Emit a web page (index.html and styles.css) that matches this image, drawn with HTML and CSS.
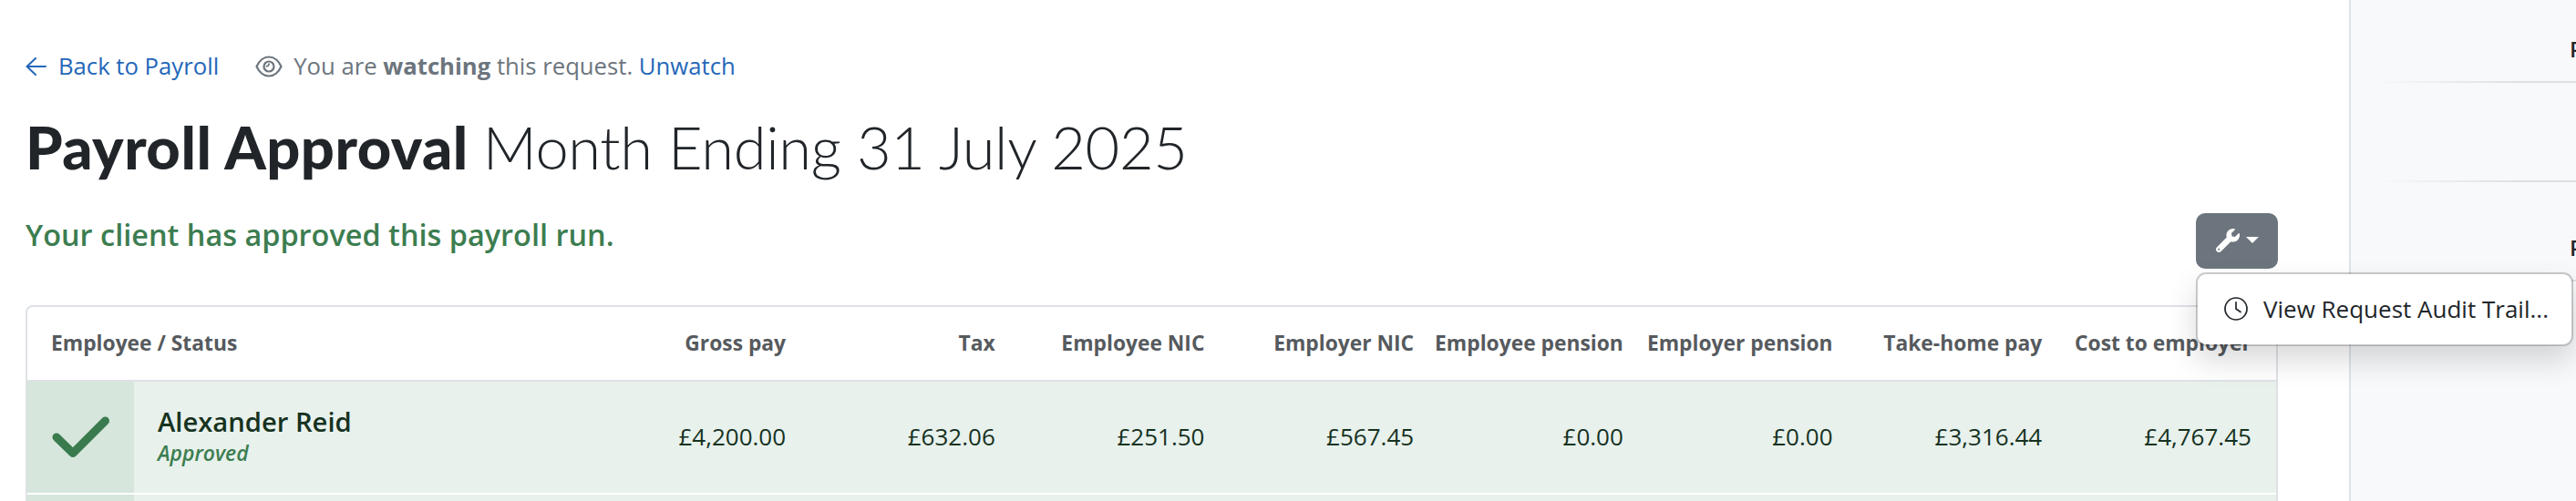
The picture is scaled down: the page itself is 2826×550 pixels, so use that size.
FILE: index.html
```html
<!DOCTYPE html>
<html lang="en">
<head>
<meta charset="utf-8">
<title>Payroll Approval</title>
<link rel="stylesheet" href="styles.css">
</head>
<body>
<div class="page">
  <main class="content">
    <nav class="crumbs">
      <a class="back" href="#">
        <svg class="icon-arrow" viewBox="0 0 23 20" fill="none" stroke="currentColor" stroke-width="2" stroke-linecap="round" stroke-linejoin="round"><path d="M11 1 1.500 10 11 19M1.500 10H22"/></svg>
        <span>Back to Payroll</span>
      </a>
      <div class="watch">
        <svg class="icon-eye" viewBox="0 0 30 24" fill="none" stroke="currentColor" stroke-width="2.200"><path d="M1.500 12C4 6.500 9 1.500 15 1.500S26 6.500 28.500 12C26 17.500 21 22.500 15 22.500S4 17.500 1.500 12Z" stroke-linejoin="round"/><circle cx="15" cy="12" r="5.500"/><path d="M15 8.500c.3 2-1 3.500-3.200 3.300" stroke-width="1.800"/></svg>
        <span>You are <b>watching</b> this request. <a href="#">Unwatch</a></span>
      </div>
    </nav>
    <h1 class="title"><span class="title-main">Payroll Approval</span><span class="title-sub">Month Ending 31 July 2025</span></h1>
    <div class="status-bar">
      <p class="status">Your client has approved this payroll run.</p>
      <div class="dropdown">
        <button class="tools">
          <svg class="icon-wrench" viewBox="0 0 512 512" fill="currentColor"><path d="M507.730 109.100c-2.240-9.030-13.540-12.090-20.120-5.510l-74.360 74.360-67.880-11.310-11.310-67.880 74.360-74.360c6.620-6.620 3.430-17.900-5.660-20.160-47.380-11.740-99.550.91-136.580 37.930-39.640 39.640-50.550 97.100-34.050 147.200L18.740 402.760c-24.990 24.990-24.990 65.510 0 90.500 24.990 24.990 65.510 24.990 90.500 0l213.210-213.210c50.120 16.710 107.470 5.680 147.370-34.220 37.070-37.070 49.700-89.320 37.910-136.730zM85 448a21 21 0 1 1-42 0 21 21 0 0 1 42 0z" fill-rule="evenodd"/></svg>
          <span class="caret"></span>
        </button>
        <div class="menu">
          <svg class="icon-clock" viewBox="0 0 26 26" fill="none" stroke="currentColor" stroke-width="1.700" stroke-linecap="round"><circle cx="13" cy="13" r="12"/><path d="M13 5.800V13l5 3.500"/></svg>
          <span>View Request Audit Trail...</span>
        </div>
      </div>
    </div>
    <section class="table">
      <div class="row head">
        <div class="name-head">Employee / Status</div>
        <div class="num">Gross pay</div><div class="num">Tax</div><div class="num">Employee NIC</div><div class="num">Employer NIC</div><div class="num">Employee pension</div><div class="num">Employer pension</div><div class="num">Take-home pay</div><div class="num">Cost to employer</div>
      </div>
      <div class="row approved">
        <div class="check"><svg class="icon-check" viewBox="0 0 64 46" fill="none" stroke="currentColor" stroke-width="9" stroke-linecap="round" stroke-linejoin="round"><path d="M5 23 23 40.500 58.500 5"/></svg></div>
        <div class="person"><div class="person-name">Alexander Reid</div><div class="person-state">Approved</div></div>
        <div class="num">£4,200.00</div><div class="num">£632.06</div><div class="num">£251.50</div><div class="num">£567.45</div><div class="num">£0.00</div><div class="num">£0.00</div><div class="num">£3,316.44</div><div class="num">£4,767.45</div>
      </div>
      <div class="row approved"><div class="check"></div></div>
    </section>
  </main>
  <aside class="side">
    <div class="side-item">P</div>
    <div class="side-item"></div>
    <div class="side-item">P</div>
  </aside>
</div>
</body>
</html>
```
FILE: styles.css
```css
* { box-sizing: border-box; }
body { margin: 0; background: #fff; color: #212529; font-family: "Open Sans", "Noto Sans", sans-serif; font-size: 26px; }
.page { display: grid; grid-template-columns: 2577px 249px; height: 550px; overflow: hidden; }
.content { padding: 54px 78px 0 28px; min-width: 0; }
a { color: #2467b9; text-decoration: none; }
.crumbs { display: flex; align-items: center; gap: 40px; height: 37px; font-size: 25.7px; color: #6c757d; white-space: nowrap; }
.back, .watch { display: flex; align-items: center; }
.back { gap: 13px; }
.watch { gap: 12px; }
.icon-arrow { width: 23px; height: 20px; }
.icon-eye { width: 30px; height: 24px; }
.title { display: flex; gap: 16px; align-items: baseline; margin: 30px 0 0; height: 80px; line-height: 80px; font-family: Lato, sans-serif; font-size: 65px; white-space: nowrap; }
.title-main { font-weight: 900; letter-spacing: 0.5px; }
.title-sub { font-weight: 300; letter-spacing: -0.33px; }
.status-bar { display: flex; justify-content: space-between; align-items: flex-start; height: 134px; padding-top: 33px; }
.status { margin: 0; padding-top: 2px; font-size: 32.45px; line-height: 44px; font-weight: 600; color: #3c7d50; }
.dropdown { position: relative; }
.tools { display: flex; align-items: center; justify-content: center; gap: 7px; width: 90px; height: 61px; padding: 0 0 2px; border: 0; border-radius: 10px; background: #6c757d; color: #fff; }
.icon-wrench { width: 26px; height: 26px; }
.caret { border: 7px solid transparent; border-top-color: #fff; border-bottom: 0; }
.menu { position: absolute; top: 65px; left: 0; z-index: 2; display: flex; align-items: center; gap: 17px; width: 414px; height: 81px; padding: 0 0 2px 29px; background: #fff; background-clip: padding-box; border: 2px solid rgba(0,0,0,.2); border-radius: 11px; box-shadow: 0 16px 32px rgba(0,0,0,.15); white-space: nowrap; }
.icon-clock { width: 26px; height: 26px; }
.table { border: 2px solid #dee2e6; border-radius: 8px 8px 0 0; height: 240px; overflow: hidden; }
.row { display: grid; grid-template-columns: 117px 485.4px repeat(8, 229.7px); align-items: center; height: 124px; border-bottom: 2px solid #fff; }
.head { height: 82px; border-bottom-color: #dee2e6; color: #565a5e; font-size: 22.8px; font-weight: 700; white-space: nowrap; }
.name-head { grid-column: 1 / 3; padding-left: 26px; }
.num { padding-bottom: 2px; text-align: right; white-space: nowrap; }
.name-head { padding-bottom: 2px; }
.approved { background: #e8f1ec; color: #16321f; }
.check { display: flex; align-items: center; justify-content: center; height: 100%; background: #d6e6dc; color: #3a7b4e; }
.icon-check { width: 64px; height: 46px; }
.person { padding: 0 0 3px 26px; }
.person-name { font-size: 29.2px; line-height: 38px; font-weight: 600; }
.person-state { font-size: 22.9px; line-height: 31px; font-style: italic; font-weight: 600; color: #3c7d50; }
.side { background: #f8f9fb; border-left: 2px solid #dee2e6; overflow: hidden; padding-left: 28px; }
.side-item { height: 109px; padding-left: 212px; font-size: 24px; font-weight: 600; line-height: 33px; padding-top: 37px; border-bottom: 2px solid; border-image: linear-gradient(90deg, transparent, #dee0e3 70%) 1; }
.side-item:last-child { padding-top: 55px; }
.side-item:first-child { height: 91px; }
```
